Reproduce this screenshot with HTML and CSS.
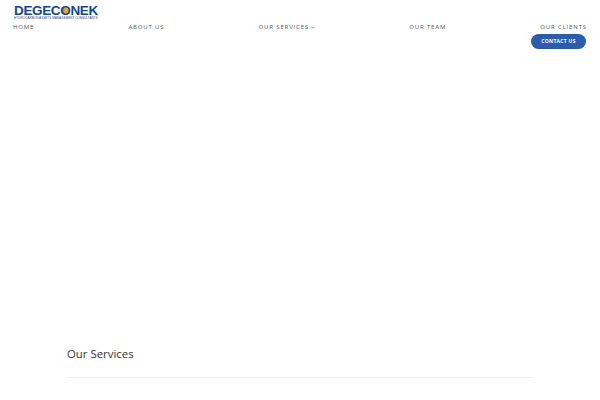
FILE: index.html
```html
<!DOCTYPE html>
<html lang="en">
<head>
    <meta charset="UTF-8">
    <meta name="viewport" content="width=device-width, initial-scale=1.0">
    <title>Degeconek</title>
    <link rel="stylesheet" href="styles.css">
</head>
<body>
    <header class="siteHeader">
        <div class="logo">
            <div class="logoName">DEGEC<span class="logoO">O</span>NEK</div>
            <div class="logoTag">HYDROCARBON ASSETS MANAGEMENT CONSULTANTS</div>
        </div>
        <nav class="mainNav">
            <a href="#">Home</a>
            <a href="#">About us</a>
            <a href="#">Our services<svg class="caret" width="4" height="3" viewBox="0 0 4 3"><path d="M0.3 0.6 L2 2.3 L3.7 0.6" fill="none" stroke="#666" stroke-width="0.7"/></svg></a>
            <a href="#">Our team</a>
            <a href="#">Our clients</a>
        </nav>
        <div class="contactRow">
            <a class="contactBtn" href="#">Contact us</a>
        </div>
    </header>
    <section class="services">
        <h2>Our Services</h2>
        <hr>
    </section>
</body>
</html>
```

FILE: styles.css
```css
body{
    margin: 0;
    background: #fff;
    font-family: "Open Sans", sans-serif;
    overflow: hidden;
}
.siteHeader{
    padding: 5px 13px 0 13px;
}
.logo{
    margin-left: 1px;
    height: 16px;
    width: 85px;
}
.logoName{
    font-family: "Liberation Sans", sans-serif;
    font-weight: bold;
    font-size: 13.5px;
    line-height: 12px;
    letter-spacing: -0.35px;
    color: #12459a;
    white-space: nowrap;
}
.logoO{
    background: radial-gradient(circle, #e8a11c 0, #e8a11c 2.5px, transparent 3px);
}
.logoTag{
    font-family: "Liberation Sans", sans-serif;
    font-size: 3.1px;
    line-height: 3px;
    color: #33476b;
    white-space: nowrap;
}
.mainNav{
    display: flex;
    justify-content: space-between;
}
.mainNav a{
    font-size: 6px;
    line-height: 12px;
    letter-spacing: 0.85px;
    text-transform: uppercase;
    color: #555;
    text-decoration: none;
    white-space: nowrap;
}
.caret{
    margin-left: 2px;
}
.contactRow{
    display: flex;
    justify-content: flex-end;
    margin-top: 1px;
    padding-right: 1px;
}
.contactBtn{
    display: block;
    width: 55px;
    height: 15px;
    line-height: 15px;
    text-align: center;
    border-radius: 8px;
    background: #2a5cb0;
    color: #fff;
    font-size: 5px;
    font-weight: bold;
    letter-spacing: 0.3px;
    text-transform: uppercase;
    text-decoration: none;
}
.services{
    margin: 296px 67px 0 67px;
}
.services h2{
    margin: 0;
    font-size: 11.4px;
    line-height: 18px;
    font-weight: 400;
    color: #333;
}
.services hr{
    margin: 14px 0 0 0;
    border: 0;
    border-top: 1px solid #eee;
}
```
